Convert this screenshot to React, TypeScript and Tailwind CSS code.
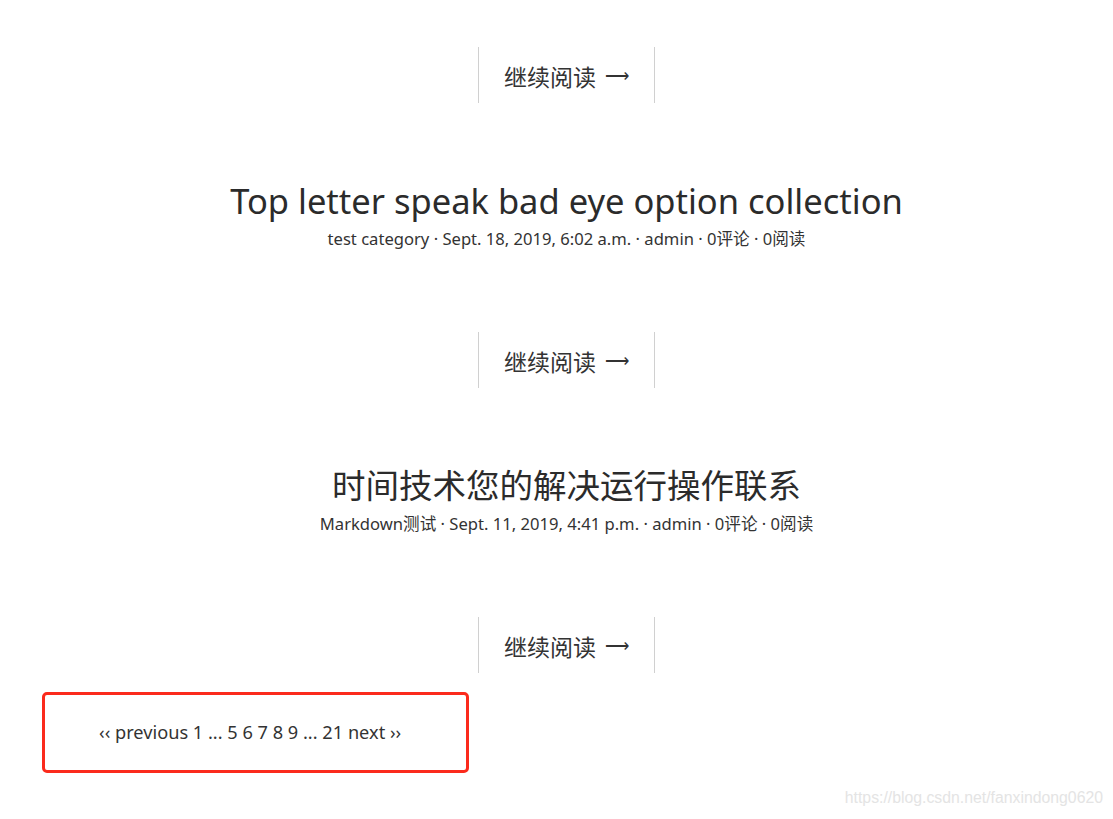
const posts = [
  {
    title: "Top letter speak bad eye option collection",
    category: "test category",
    date: "Sept. 18, 2019, 6:02 a.m.",
    cjk: false,
  },
  {
    title: "时间技术您的解决运行操作联系",
    category: "Markdown测试",
    date: "Sept. 11, 2019, 4:41 p.m.",
    cjk: true,
  },
];

function ReadMore() {
  return (
    <div className="flex justify-center">
      <a className="flex h-[56px] w-[177px] items-center justify-center border-x border-[#d0d0d0] pt-[4px] text-[23px] text-[#333]">
        继续阅读
        <span className="ml-[9px] font-['DejaVu_Sans',sans-serif] text-[17px] font-light">⟶</span>
      </a>
    </div>
  );
}

export default function App() {
  return (
    <div className="relative min-h-[819px] bg-white font-['Noto_Sans','Noto_Sans_CJK_SC',sans-serif] text-[#333]">
      <div className="ml-[20px] pt-[47px]">
        <ReadMore />
        {posts.map((post) => (
          <div key={post.title}>
            <div className="mt-[77px] text-center">
              <h2
                className={`leading-[41px] text-[#2b2b2b] ${post.cjk ? "text-[33.5px]" : "text-[34.5px]"}`}
              >
                {post.title}
              </h2>
              <p className="mt-[6px] text-[16.6px] leading-[24px]">
                {post.category} · {post.date} · admin · 0评论 · 0阅读
              </p>
            </div>
            <div className="mt-[81px]">
              <ReadMore />
            </div>
          </div>
        ))}
      </div>

      <div className="ml-[42px] mt-[19px] flex h-[81px] w-[427px] items-center rounded-[5px] border-[3px] border-[#fb2a1c] pl-[54px]">
        <p className="text-[18.2px] text-[#333]">‹‹ previous 1 ... 5 6 7 8 9 ... 21 next ››</p>
      </div>

      <div className="absolute bottom-[9px] right-[10px] font-['Liberation_Sans',sans-serif] text-[15.8px] text-[#e4e4e4]">
        https://blog.csdn.net/fanxindong0620
      </div>
    </div>
  );
}
